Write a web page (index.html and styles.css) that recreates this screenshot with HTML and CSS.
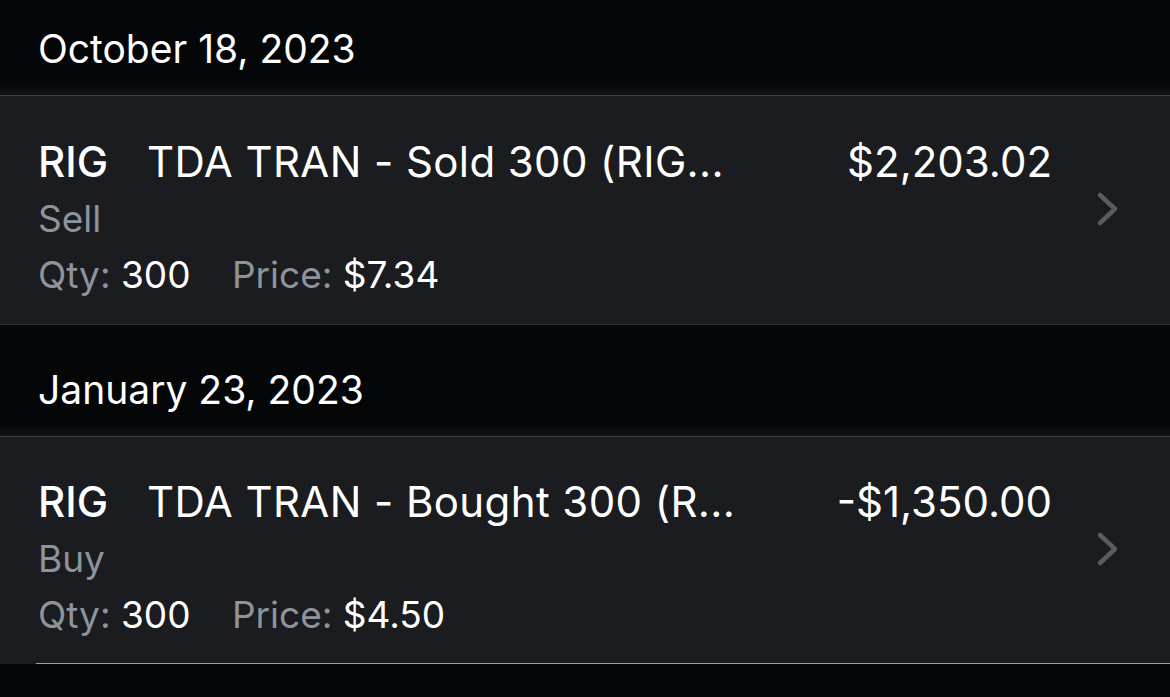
FILE: index.html
```html
<!DOCTYPE html>
<html>
<head>
<meta charset="utf-8">
<link rel="stylesheet" href="styles.css">
</head>
<body>
<div class="list">
  <div class="header header--first"><span class="date">October 18, 2023</span></div>
  <div class="card">
    <div class="main">
      <div class="line top">
        <span class="symbol">RIG</span>
        <span class="desc">TDA TRAN - Sold 300 (RIG...</span>
        <span class="amount">$2,203.02</span>
      </div>
      <div class="line muted">Sell</div>
      <div class="line">
        <span class="muted">Qty:</span> <span>300</span>
        <span class="muted price-label">Price:</span> <span>$7.34</span>
      </div>
    </div>
    <svg class="chevron" width="24" height="36" viewBox="0 0 24 36"><path d="M4 4 L19 18 L4 32" fill="none" stroke="#5a5c60" stroke-width="4.5" stroke-linecap="round" stroke-linejoin="round"/></svg>
  </div>
  <div class="header"><span class="date">January 23, 2023</span></div>
  <div class="card card--last">
    <div class="main">
      <div class="line top">
        <span class="symbol">RIG</span>
        <span class="desc">TDA TRAN - Bought 300 (R...</span>
        <span class="amount">-$1,350.00</span>
      </div>
      <div class="line muted">Buy</div>
      <div class="line">
        <span class="muted">Qty:</span> <span>300</span>
        <span class="muted price-label">Price:</span> <span>$4.50</span>
      </div>
    </div>
    <svg class="chevron" width="24" height="36" viewBox="0 0 24 36"><path d="M4 4 L19 18 L4 32" fill="none" stroke="#5a5c60" stroke-width="4.5" stroke-linecap="round" stroke-linejoin="round"/></svg>
  </div>
</div>
</body>
</html>
```

FILE: styles.css
```css
html, body {
  margin: 0;
  padding: 0;
  background: #050608;
}
body {
  font-family: Inter, "Noto Sans", "Liberation Sans", sans-serif;
  color: #ffffff;
  width: 1170px;
  height: 697px;
  overflow: hidden;
}
.list {
  display: flex;
  flex-direction: column;
}
.header {
  height: 111px;
  box-sizing: border-box;
  display: flex;
  align-items: flex-end;
  padding: 0 0 23px 38px;
  background: linear-gradient(to bottom, #050608 0, #050608 calc(100% - 12px), #111214 100%);
}
.header--first {
  height: 95px;
}
.date {
  font-size: 39px;
  line-height: 46px;
  font-weight: 400;
}
.card {
  background: #1a1c1f;
  border-top: 1px solid #3b3d40;
  border-bottom: 1px solid #2e3033;
  display: flex;
  align-items: center;
  padding: 37px 50px 21px 38px;
}
.card--last {
  padding-top: 36px;
  border-bottom: none;
  position: relative;
}
.card--last::after {
  content: "";
  position: absolute;
  left: 36px;
  right: 0;
  bottom: 0;
  height: 1px;
  background: #9da1a6;
}
.main {
  flex: 1;
  display: flex;
  flex-direction: column;
}
.line {
  font-size: 37px;
  line-height: 56px;
  height: 56px;
  white-space: nowrap;
}
.top {
  display: flex;
  font-size: 42px;
  line-height: 58px;
  height: 58px;
}
.symbol {
  font-weight: 500;
  width: 109px;
}
.desc {
  font-weight: 400;
  letter-spacing: 0.4px;
}
.amount {
  margin-left: auto;
}
.muted {
  color: #8d949c;
}
.price-label {
  margin-left: 31px;
}
.chevron {
  margin-left: 44px;
  margin-top: -18px;
  flex: none;
}
```
